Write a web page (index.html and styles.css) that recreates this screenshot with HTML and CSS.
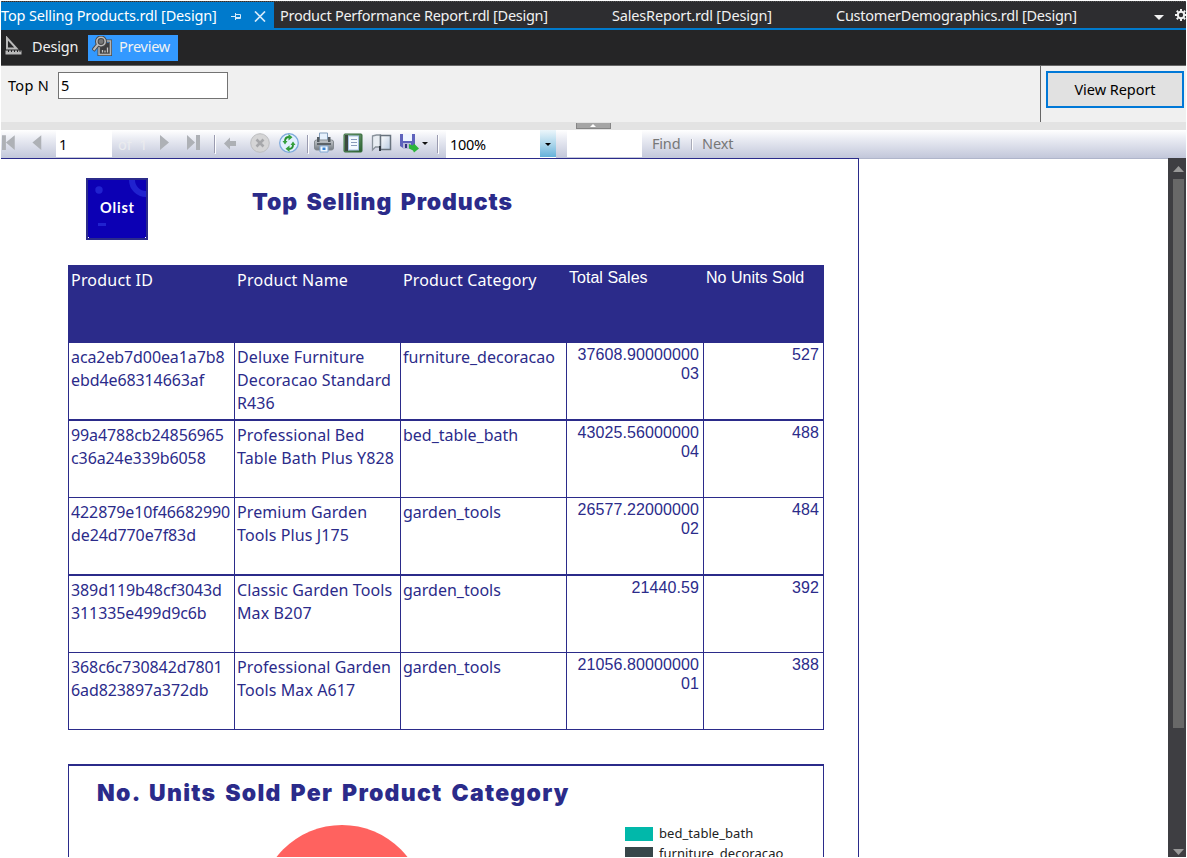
FILE: index.html
```html
<!DOCTYPE html>
<html lang="en">
<head>
<meta charset="utf-8">
<title>Top Selling Products</title>
<link rel="stylesheet" href="styles.css">
</head>
<body>
<div class="window">
  <nav class="tabs">
    <div class="tab active"><span class="t1">Top Selling Products.rdl [Design]</span>
      <svg class="pin" width="12" height="10" viewBox="0 0 12 10" fill="none" stroke="#d5eafa"><path d="M0 5.500h4M4.500 2v7M4.500 3.500h5v4h-5M4.500 6.500h5"/></svg>
      <svg class="close" width="12" height="11" viewBox="0 0 12 11" stroke="#d5eafa" stroke-width="1.7"><path d="M1 .5l10 10M11 .5l-10 10"/></svg>
    </div>
    <span class="tab t2">Product Performance Report.rdl [Design]</span>
    <span class="tab t3">SalesReport.rdl [Design]</span>
    <span class="tab t4">CustomerDemographics.rdl [Design]</span>
    <svg class="chev" width="10" height="5" viewBox="0 0 10 5"><path d="M0 0h10L5 5z" fill="#f1f1f1"/></svg>
    <svg class="gear" width="12" height="12" viewBox="0 0 12 12" fill="none" stroke="#f1f1f1"><circle cx="6" cy="6" r="3.2" stroke-width="2"/><path d="M6 0v2M6 10v2M0 6h2M10 6h2M1.8 1.8l1.4 1.4M8.8 8.8l1.4 1.4M10.2 1.8L8.8 3.2M3.2 8.8l-1.4 1.4" stroke-width="2"/></svg>
  </nav>
  <div class="modes">
    <div class="mode design">
      <svg width="18" height="20" viewBox="0 0 18 20" fill="none" stroke="#b9b9b9"><path d="M2 2v10.500h9.500z" stroke-width="2"/><path d="M.5 14.500h16v4H.500z" fill="#b9b9b9" stroke="none"/><path d="M3.500 14v2M6.500 14v2M9.500 14v2M12.500 14v2M15 14v2" stroke="#252526"/></svg>
      <span>Design</span></div>
    <div class="mode preview">
      <svg width="20" height="20" viewBox="0 0 20 20" fill="none"><path d="M7 7h11.500v11.500H7z" fill="#3e3e40"/><path d="M7 10v8.500h11.500V5H14" stroke="#4b4b4b" stroke-width="3"/><path d="M7 10v8.500h11.500V5H14" stroke="#b4b4b4" stroke-width="1.500"/><path d="M10.500 16.500v-2.500M13 16.500v-2M15.500 16.500v-5" stroke="#c4c4c4" stroke-width="1.300"/><circle cx="9" cy="5.500" r="4.200" stroke="#484848" stroke-width="3.600" fill="#777"/><path d="M6 8.500l-5 6" stroke="#484848" stroke-width="4"/><circle cx="9" cy="5.500" r="4.200" stroke="#bbb" stroke-width="1.600"/><path d="M6 8.500l-4.500 5.500" stroke="#bbb" stroke-width="2"/></svg>
      <span>Preview</span></div>
  </div>
  <section class="params">
    <label>Top N</label><div class="input">5</div>
    <div class="action"><button>View Report</button></div>
  </section>
  <div class="splitter"><div class="grip"><svg width="6" height="3" viewBox="0 0 6 3"><path d="M0 3h6L3 0z" fill="#fff"/></svg></div></div>
  <div class="toolbar">
    <svg class="nav" width="56" height="27" viewBox="0 0 56 27" fill="#aeb1b6"><path d="M1 5h4v15H1zM14 5v15L5 12.500zM41 5v15l-9-7.500z"/></svg>
    <div class="page">1</div><span class="of">of&nbsp; 1</span>
    <svg class="icons" width="298" height="27" viewBox="0 0 298 27">
      <defs>
        <linearGradient id="metal" x2="0" y2="1"><stop stop-color="#c5c9cd"/><stop offset="1" stop-color="#747b82"/></linearGradient>
        <linearGradient id="leaf" x2="1" y2="1"><stop stop-color="#8ab28c"/><stop offset="1" stop-color="#285f2e"/></linearGradient>
        <linearGradient id="cover" x2="1" y2="1"><stop stop-color="#fff"/><stop offset="1" stop-color="#b8cbe2"/></linearGradient>
      </defs>
      <path d="M12 5v15l9-7.500zM39 5v15l8-7.500zM48 5h4v15h-4z" fill="#aeb1b6"/>
      <path d="M66.500 5v18M159.500 5v18M289.500 5v18" stroke="#9a9bb0"/><path d="M67.500 5v19M160.500 5v19M290.500 5v19" stroke="#fff"/>
      <path d="M76 13.500l6-6v3.500h6v5h-6v3.500z" fill="#adb0b5"/>
      <circle cx="112" cy="13" r="9.300" fill="#d5d5d6" stroke="#bdbec0"/><path d="M108.500 9.500l7 7M115.500 9.500l-7 7" stroke="#a6a7aa" stroke-width="2.600"/>
      <circle cx="141" cy="13" r="9.300" fill="#e1effd" stroke="#7da9db" stroke-width="1.300"/>
      <path d="M137 11.500c0-3 1.500-4.500 4-4.500M145 14.500c0 3-1.500 4.500-4 4.500" fill="none" stroke="#299232" stroke-width="1.900"/><path d="M140.500 4l4 3.300-4 3.200zM141.500 15.500l-4 3.200 4 3.300zM134.500 11h5l-2.500 3.500zM147.500 15h-5l2.500-3.500z" fill="#35a13c"/>
      <path d="M171.500 3h8v8h-8z" fill="#e6f1fd" stroke="#839db9"/><rect x="166.500" y="10" width="19" height="10" rx="2" fill="url(#metal)" stroke="#858b91"/><path d="M169 7h2.500v5H169zM180 7h2.500v5H180z" fill="#555c62"/><path d="M169 14h14" stroke="#5c6369" stroke-width="2"/><path d="M172 16h8v6h-8z" fill="#f2f8ff" stroke="#80a7d2"/><path d="M174.500 17.500h3v2.500h-3z" fill="#3683d4"/>
      <rect x="196" y="4" width="18" height="18" rx="1" fill="url(#leaf)" stroke="#356a3a"/><path d="M197 5h3v16h-3z" fill="#3c4940"/><rect x="200.500" y="6" width="10" height="14" fill="#f5faff" stroke="#a8c2e6"/><path d="M203 9.500h6M203 12.500h6M203 15.500h6" stroke="#8a9cbc"/>
      <path d="M224.500 6l4-1h4v12h-5l-3 3z" fill="#e8edf2" stroke="#89929b" stroke-width="1.300"/><path d="M232.500 5.500h10v14h-10z" fill="url(#cover)" stroke="#68737e" stroke-width="1.500"/><path d="M232 16v5" stroke="#333c45" stroke-width="2"/>
      <path d="M252 4h15v14h-12l-3-2z" fill="#5e62bc"/><path d="M255 4h9v7h-9z" fill="#eef4ff"/><path d="M255 13h8v6h-8z" fill="#b7b9da"/><path d="M257 14h2v4h-2z" fill="#34347e"/><path d="M261 14l4 1.500 1-2 5 5-5 4-1-2-4-2z" fill="#2cb53a"/><path d="M274 12h6l-3 3z" fill="#111"/>
    </svg>
    <div class="zoom"><span>100%</span><i><svg width="6" height="3" viewBox="0 0 6 3"><path d="M0 0h6L3 3z"/></svg></i></div>
    <div class="findbox"></div><span class="find">Find</span><i class="sep"></i><span class="next">Next</span>
  </div>
  <main class="viewer">
    <article class="report">
      <header>
        <svg class="logo" width="62" height="62" viewBox="0 0 62 62"><path fill="#2b2b8a" d="M0 0h62v62H0z"/><rect x="2" y="2" width="58" height="58" fill="#0c00b4"/><circle cx="13" cy="12" r="3.700" fill="#2022cf"/><path d="M46 2a14 14 0 0 0 14 14" fill="none" stroke="#2022cf" stroke-width="6"/><path d="M12 45h8v3h-8z" fill="#2022cf"/><path d="M2 59h1v1H2zM59 59h1v1h-1z" fill="#fff"/><path d="M60 0h2v62h-2zM0 0h62v2H0z" fill="#2b2b8a"/><text x="14" y="35" textLength="34" class="logotext">Olist</text></svg>
        <h1>Top Selling Products</h1>
      </header>
      <div class="table">
        <div class="row head"><div>Product ID</div><div>Product Name</div><div>Product Category</div><div>Total Sales</div><div>No Units Sold</div></div>
        <div class="row"><div>aca2eb7d00ea1a7b8<br>ebd4e68314663af</div><div>Deluxe Furniture<br>Decoracao Standard<br>R436</div><div>furniture_decoracao</div><div>37608.90000000<br>03</div><div>527</div></div>
        <div class="row thick"><div>99a4788cb24856965<br>c36a24e339b6058</div><div>Professional Bed<br>Table Bath Plus Y828</div><div>bed_table_bath</div><div>43025.56000000<br>04</div><div>488</div></div>
        <div class="row"><div>422879e10f46682990<br>de24d770e7f83d</div><div>Premium Garden<br>Tools Plus J175</div><div>garden_tools</div><div>26577.22000000<br>02</div><div>484</div></div>
        <div class="row thick"><div>389d119b48cf3043d<br>311335e499d9c6b</div><div>Classic Garden Tools<br>Max B207</div><div>garden_tools</div><div>21440.59</div><div>392</div></div>
        <div class="row last"><div>368c6c730842d7801<br>6ad823897a372db</div><div>Professional Garden<br>Tools Max A617</div><div>garden_tools</div><div>21056.80000000<br>01</div><div>388</div></div>
      </div>
      <section class="chart">
        <h2>No. Units Sold Per Product Category</h2>
        <div class="plot">
          <svg class="pie" width="200" height="36" viewBox="0 0 200 36"><circle cx="100" cy="85" r="83" fill="#ff625f"/></svg>
          <div class="legend"><div><i class="teal"></i>bed_table_bath</div><div><i class="slate"></i>furniture_decoracao</div></div>
        </div>
      </section>
    </article>
    <div class="scroll"><svg width="11" height="6" viewBox="0 0 11 6"><path d="M0 6h11L5.500 0z" fill="#999"/></svg><div class="thumb"></div><svg class="down" width="11" height="6" viewBox="0 0 11 6"><path d="M0 0h11L5.500 6z" fill="#999"/></svg></div>
  </main>
</div>
</body>
</html>
```
FILE: styles.css
```css
* { box-sizing: border-box; }
body { margin: 0; background: #fff; overflow: hidden; font-family: "Noto Sans", sans-serif; font-size: 14.5px; }
svg { display: block; flex: none; }
.window { width: 1186px; height: 857px; padding: 1px 0 0 1px; display: flex; flex-direction: column; overflow: hidden; white-space: nowrap; }
.tabs { height: 29px; flex: none; display: flex; background: #2d2d30; border-bottom: 2px solid #007acc; color: #f1f1f1; line-height: 27px; border-top: 1px dotted #555; overflow: hidden; }
.tab.active { width: 273px; background: #007acc; display: flex; height: 28px; color: #fff; }
.tab { flex: none; }
.t1 { width: 230px; letter-spacing: -.15px; }
.pin { margin-top: 9px; }
.close { margin: 9px 0 0 11px; }
.t2 { width: 332px; padding-left: 6px; letter-spacing: -.27px; }
.t3 { width: 224px; padding-left: 6px; letter-spacing: -.17px; }
.t4 { width: 324px; padding-left: 6px; letter-spacing: -.25px; }
.chev { margin-top: 13px; }
.gear { margin: 7px 0 0 11px; }
.modes { height: 35px; flex: none; background: #252526; display: flex; padding-top: 5px; color: #f1f1f1; line-height: 20px; }
.mode { height: 26px; display: flex; }
.design { width: 87px; padding: 1px 0 0 4px; letter-spacing: -.15px; }
.design span { margin-left: 9px; }
.preview { width: 90px; padding: 1px 0 0 4px; background: #3399ff; letter-spacing: -.25px; }
.preview span { margin-left: 7px; }
.params { height: 57px; flex: none; background: #f0f0f0; border-top: 1px solid #666; display: flex; }
.params label { width: 57px; padding: 10px 0 0 7px; line-height: 19px; letter-spacing: .3px; }
.input { width: 170px; height: 27px; margin-top: 6px; border: 1px solid #737373; background: #fff; padding-left: 2px; line-height: 25px; }
.action { margin-left: auto; width: 146px; border-left: 1px solid #666; padding: 5px 0 0 5px; }
button { display: block; width: 138px; height: 37px; border: 2px solid #0078d7; background: #e1e1e1; font: inherit; color: #000; letter-spacing: -.05px; padding: 0 0 2px; }
.splitter { height: 8px; flex: none; background: #e3e3e3; display: flex; justify-content: center; padding: 1px 1px 0 0; }
.grip { width: 35px; height: 6px; background: #a5a5a5; border: 1px solid #858585; border-width: 0 1px 1px; display: flex; justify-content: center; padding-top: 1px; }
.toolbar { height: 29px; flex: none; display: flex; background: linear-gradient(#fff, #e8eaf2 35%, #c2c7da); border-bottom: 1px solid #afb5ca; line-height: 29px; }
.nav { width: 55px; }
.page { width: 56px; height: 27px; background: #fff; padding-left: 3px; line-height: 28px; }
.of { width: 36px; padding-left: 6px; color: #ebecef; line-height: 28px; }
.zoom { width: 110px; height: 28px; background: #fff; display: flex; justify-content: space-between; padding-left: 4px; letter-spacing: -.3px; }
.zoom i { width: 16px; height: 27px; background: linear-gradient(#ecf6fb, #a8d4ea 55%, #65b1da); display: flex; align-items: center; justify-content: center; padding-top: 2px; }
.findbox { width: 75px; height: 27px; background: #fff; margin-left: 11px; }
.find { width: 49px; padding-left: 10px; color: #777; line-height: 27px; letter-spacing: -.2px; }
.sep { width: 2px; height: 11px; margin-top: 9px; background: #a9abb8; border-right: 1px solid #fff; }
.next { margin-left: 9px; color: #777; line-height: 27px; letter-spacing: -.1px; }
.viewer { flex: 1; min-height: 0; display: flex; justify-content: space-between; }
.report { width: 858px; margin-top: -1px; border: 1px solid #2b2b8a; border-width: 1px 1px 0 0; padding-left: 67px; overflow: hidden; color: #2b2b8a; }
.report header { height: 106px; padding: 19px 0 0 18px; display: flex; }
.logotext { font: 700 14.5px Lato, sans-serif; fill: #fff; }
h1, h2 { font-family: Inter, "Liberation Sans", Arial, sans-serif; font-weight: 900; color: #2b2b8a; margin: 0; word-spacing: 3px; }
h1 { font-size: 23px; line-height: 28px; margin: 10px 0 0 104px; letter-spacing: .9px; }
.table { width: 756px; font-size: 16px; }
.row { height: 77px; display: grid; grid-template-columns: 167px 166px 166px 137px 120px; border-top: 1px solid #2b2b8a; line-height: 23px; letter-spacing: 0; }
.row.thick { height: 78px; border-top-width: 2px; }
.row.last { height: 78px; border-bottom: 1px solid #2b2b8a; }
.row > div { border-right: 1px solid #2b2b8a; padding: 3px 0 0 2px; }
.row > div:first-child { border-left: 1px solid #2b2b8a; letter-spacing: -.1px; }
.row > div:nth-child(2) { letter-spacing: .1px; }
.row > div:nth-child(n+4) { font-family: "Liberation Sans", Arial, sans-serif; text-align: right; padding: 2px 4px 0 0; line-height: 19px; letter-spacing: .1px; }
.row.head { background: #2b2b8a; color: #fff; letter-spacing: .15px; }
.row.head > div:first-child { letter-spacing: .2px; }
.row.head > div:nth-child(2) { letter-spacing: .25px; }
.row.head > div:nth-child(n+4) { text-align: left; padding-left: 2px; letter-spacing: .03px; }
.chart { width: 756px; height: 130px; margin-top: 34px; border: 1px solid #2b2b8a; border-top-width: 2px; }
h2 { font-size: 23px; line-height: 28px; padding: 13px 0 0 28px; letter-spacing: 1.28px; }
.plot { display: flex; }
.pie { margin: 16px 0 0 173px; }
.legend { margin: 16px 0 0 183px; font-size: 13px; color: #222; letter-spacing: .05px; }
.legend div { height: 20px; display: flex; line-height: 21px; }
.legend i { width: 28px; height: 14px; margin: 4px 6px 0 0; }
.teal { background: #01b8aa; }
.slate { background: #374649; }
.scroll { width: 18px; background: #3e3e42; display: flex; flex-direction: column; align-items: center; margin-top: -1px; padding: 8px 0 2px 3px; }
.thumb { width: 11px; height: 549px; margin-top: 7px; background: #686868; }
.down { margin-top: auto; }
```
